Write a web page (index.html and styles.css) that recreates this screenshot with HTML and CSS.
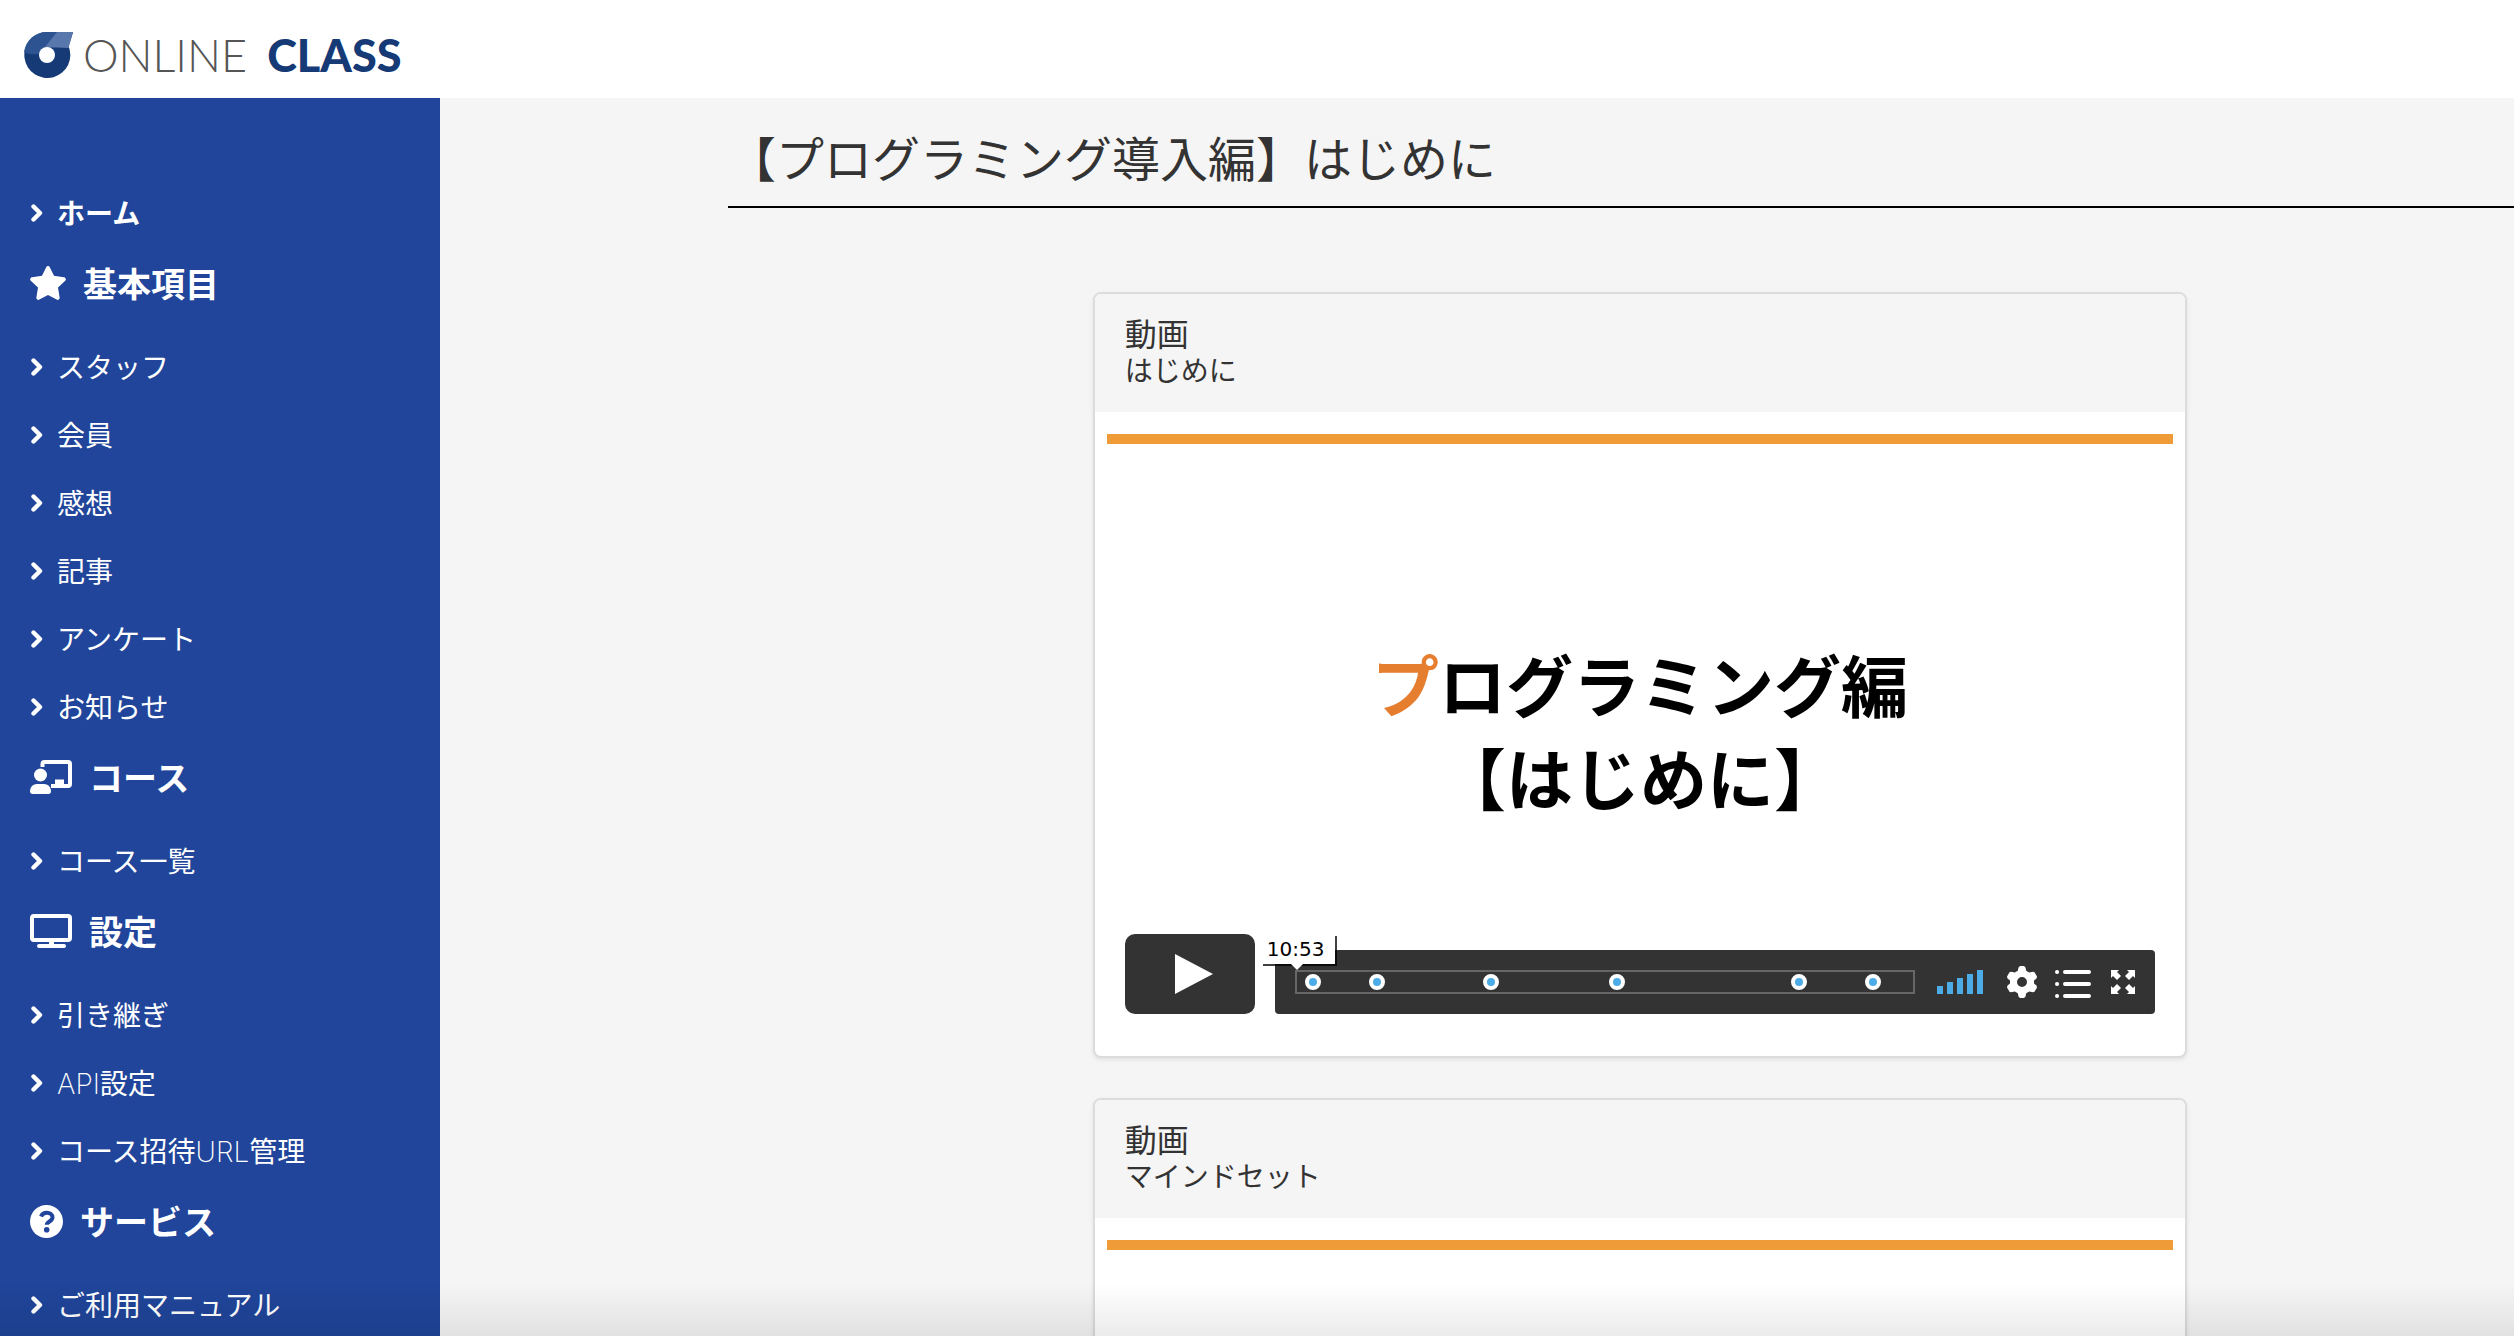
FILE: index.html
```
<!DOCTYPE html>
<html lang="ja">
<head>
	<meta charset="UTF-8">
	<title>ONLINE CLASS</title>
	<link rel="stylesheet" href="styles.css">
</head>
<body>
	<svg class="sprite" aria-hidden="true">
		<symbol id="chevron" viewBox="0 0 12 18">
			<path d="M2.500 2.500L9 9l-6.500 6.500" fill="none" stroke="currentColor" stroke-width="4.400" stroke-linecap="round" stroke-linejoin="round"/>
		</symbol>
	</svg>
	<header class="header">
		<a href="#" class="logo">
			<svg class="logo_mark" viewBox="0 0 49 46">
				<path d="M49 0H23a23 23 0 1 0 21.500 14z" fill="#153a76"/>
				<path d="M49 0H23C11 0 2 8 0 20c8 4 18 3 24-4l20.500-2z" fill="#2d5490"/>
				<path d="M49 0H33L21 15l23.500 1z" fill="#5877ad"/>
				<circle cx="23" cy="23" r="8" fill="#fff"/>
			</svg>
			<span class="logo_online">ONLINE</span>
			<span class="logo_class">CLASS</span>
		</a>
	</header>
	<div class="wrap">
		<nav class="sidebar">
			<ul>
				<li><a href="#" class="home"><svg class="chevron"><use href="#chevron"/></svg>ホーム</a></li>
			</ul>
			<h2>
				<svg class="icon" width="36" height="34" viewBox="0 0 36 34"><path d="M16.200 1.200a2 2 0 0 1 3.600 0l4.200 8.600 9.800 1.500a2 2 0 0 1 1.200 3.600l-7 6.700 1.600 9.900a2 2 0 0 1-3 2.100L18 29.100l-8.600 4.500a2 2 0 0 1-3-2.100L8 21.600 1 14.900a2 2 0 0 1 1.200-3.600L12 9.800z" fill="currentColor"/></svg>
				基本項目
			</h2>
			<ul>
				<li><a href="#"><svg class="chevron"><use href="#chevron"/></svg>スタッフ</a></li>
				<li><a href="#"><svg class="chevron"><use href="#chevron"/></svg>会員</a></li>
				<li><a href="#"><svg class="chevron"><use href="#chevron"/></svg>感想</a></li>
				<li><a href="#"><svg class="chevron"><use href="#chevron"/></svg>記事</a></li>
				<li><a href="#"><svg class="chevron"><use href="#chevron"/></svg>アンケート</a></li>
				<li><a href="#"><svg class="chevron"><use href="#chevron"/></svg>お知らせ</a></li>
			</ul>
			<h2>
				<svg class="icon" width="42" height="34" viewBox="0 0 42 34">
					<path d="M12.500 7V4a2 2 0 0 1 2-2H38a2 2 0 0 1 2 2v20a2 2 0 0 1-2 2H21" fill="none" stroke="currentColor" stroke-width="4"/>
					<path d="M25 19.500h9V26h-9z" fill="currentColor"/>
					<circle cx="10.500" cy="15" r="6.500" fill="currentColor"/>
					<path d="M0 31.500C0 27 3 24 7 24h7c4 0 7 3 7 7.500 0 1.500-1 2.500-2.500 2.500h-16C1 34 0 33 0 31.500z" fill="currentColor"/>
				</svg>
				コース
			</h2>
			<ul>
				<li><a href="#"><svg class="chevron"><use href="#chevron"/></svg>コース一覧</a></li>
			</ul>
			<h2>
				<svg class="icon" width="42" height="34" viewBox="0 0 42 34">
					<rect x="2" y="2" width="38" height="24" rx="2" fill="none" stroke="currentColor" stroke-width="4"/>
					<path d="M19 27h5v4h-5z" fill="currentColor"/>
					<rect x="7" y="30" width="29" height="4" rx="2" fill="currentColor"/>
				</svg>
				設定
			</h2>
			<ul>
				<li><a href="#"><svg class="chevron"><use href="#chevron"/></svg>引き継ぎ</a></li>
				<li><a href="#"><svg class="chevron"><use href="#chevron"/></svg><span><span class="latin">API</span>設定</span></a></li>
				<li><a href="#"><svg class="chevron"><use href="#chevron"/></svg><span>コース招待<span class="latin">URL</span>管理</span></a></li>
			</ul>
			<h2>
				<svg class="icon" width="33" height="33" viewBox="0 0 33 33">
					<circle cx="16.500" cy="16.500" r="16.500" fill="currentColor"/>
					<path d="M11 11.500c1-2.500 3-3.800 5.800-3.800 3.300 0 5.700 2 5.700 4.700 0 4-5.700 4-5.700 7.300" fill="none" stroke="#20459a" stroke-width="4"/>
					<circle cx="16.700" cy="24.800" r="2.800" fill="#20459a"/>
				</svg>
				サービス
			</h2>
			<ul>
				<li><a href="#"><svg class="chevron"><use href="#chevron"/></svg>ご利用マニュアル</a></li>
			</ul>
		</nav>
		<main class="main">
			<div class="content">
				<h1>【プログラミング導入編】はじめに</h1>
				<section class="card">
					<div class="card_head">
						<h3>動画</h3>
						<p>はじめに</p>
					</div>
					<div class="card_body">
						<div class="video">
							<div class="slide">
								<p><span class="orange">プ</span>ログラミング編</p>
								<p>【はじめに】</p>
							</div>
							<div class="player">
								<button class="play" aria-label="再生">
									<svg width="38" height="40" viewBox="0 0 38 40"><path d="M0 0l38 20L0 40z" fill="#fff"/></svg>
								</button>
								<div class="bar">
									<div class="progress">
										<span class="time">10:53</span>
										<button class="dot" style="left:2.600%"></button>
										<button class="dot" style="left:13%"></button>
										<button class="dot" style="left:31.500%"></button>
										<button class="dot" style="left:52%"></button>
										<button class="dot" style="left:81.500%"></button>
										<button class="dot" style="left:93.500%"></button>
									</div>
									<button class="volume" aria-label="音量">
										<svg width="46" height="24" viewBox="0 0 46 24"><path d="M0 16h6v8H0zM10 12h6v12h-6zM20 8h6v16h-6zM30 4h6v20h-6zM40 0h6v24h-6z" fill="#4bace8"/></svg>
									</button>
									<button class="gear" aria-label="設定">
										<svg width="30" height="32" viewBox="0 0 30 32"><path fill-rule="evenodd" d="M13 0h4l1.500 1.500.7 3.300 3 1.600L26 5.700l1.500.6L30 10.500l-.5 2-2.500 2v3l2.500 2 .5 2-2.500 4.200-1.500.6-3.800-.7-3 1.600-.7 3.300L17 32h-4l-1.500-1.500-.7-3.300-3-1.600-3.800.7-1.500-.6L0 21.500l.5-2 2.500-2v-3l-2.500-2-.5-2 2.500-4.200L4 5.700l3.800.7 3-1.600.7-3.300zM15 11a5 5 0 1 0 0 10 5 5 0 0 0 0-10z" fill="#fff"/></svg>
									</button>
									<button class="chapters" aria-label="チャプター">
										<svg width="36" height="28" viewBox="0 0 36 28" stroke="#fff" stroke-width="4" stroke-linecap="round"><path d="M2 2h.1M10 2h24M2 14h.1M10 14h24M2 26h.1M10 26h24"/></svg>
									</button>
									<button class="full" aria-label="全画面">
										<svg width="24" height="24" viewBox="0 0 24 24"><path d="M0 0h8L6 2l4 4-4 4-4-4-2 2zM24 0h-8l2 2-4 4 4 4 4-4 2 2zM0 24h8l-2-2 4-4-4-4-4 4-2-2zM24 24h-8l2-2-4-4 4-4 4 4 2-2z" fill="#fff"/></svg>
									</button>
								</div>
							</div>
						</div>
					</div>
				</section>
				<section class="card">
					<div class="card_head">
						<h3>動画</h3>
						<p>マインドセット</p>
					</div>
					<div class="card_body">
						<div class="video"></div>
					</div>
				</section>
			</div>
		</main>
	</div>
	<div class="shade"></div>
</body>
</html>
```
FILE: styles.css
```
*{
	box-sizing: border-box;
}
body,h1,h2,h3,p,ul{
	margin: 0;
	padding: 0;
}
body{
	height: 100vh;
	display: flex;
	flex-direction: column;
	font-family: "Noto Sans CJK JP", sans-serif;
	color: #333;
	background: #f5f5f5;
}
a{
	color: inherit;
	text-decoration: none;
}
button{
	padding: 0;
	border: none;
	background: none;
	cursor: pointer;
}
svg{
	display: block;
	flex: none;
}
.sprite{
	width: 0;
	height: 0;
	position: absolute;
}
/* header */
.header{
	height: 98px;
	flex: none;
	padding: 0 24px;
	display: flex;
	align-items: center;
	background: #fff;
}
.logo{
	display: flex;
	align-items: center;
	padding-top: 12px;
	font-family: Lato, sans-serif;
	font-size: 45px;
	line-height: 46px;
}
.logo_mark{
	width: 49px;
	height: 46px;
	margin-right: 10px;
}
.logo_online{
	font-weight: 300;
	color: #555;
	margin-right: 20px;
}
.logo_class{
	font-weight: 900;
	color: #153a76;
}
.wrap{
	flex: 1;
	min-height: 0;
	display: flex;
}
/* sidebar */
.sidebar{
	width: 440px;
	flex: none;
	padding: 80px 30px 0;
	overflow: auto;
	scrollbar-width: none;
	color: #fff;
	background: #20459a;
}
.sidebar ul{
	list-style: none;
}
.sidebar li a{
	height: 68px;
	display: flex;
	align-items: center;
	font-size: 28px;
}
.sidebar .home{
	font-weight: 700;
}
.sidebar h2{
	height: 72px;
	margin-bottom: 14px;
	display: flex;
	align-items: center;
	gap: 17px;
	font-size: 34px;
	font-weight: 700;
}
.icon{
	margin-top: 2px;
}
.chevron{
	width: 12px;
	height: 18px;
	margin: 2px 14px 0 1px;
}
.latin{
	font-family: Inter, sans-serif;
	font-weight: 200;
}
/* content */
.main{
	flex: 1;
	min-width: 0;
	overflow-x: hidden;
	overflow-y: auto;
	scrollbar-width: none;
}
.content{
	margin: 0 -38px 0 288px;
}
h1{
	padding: 22px 0 14px;
	margin-bottom: 84px;
	border-bottom: 2px solid #000;
	font-size: 48px;
	line-height: 72px;
	font-weight: 400;
}
.card{
	width: 60%;
	margin: 0 auto 40px;
	border: 2px solid #dcdcdc;
	border-radius: 8px;
	box-shadow: 0 2px 4px rgba(0,0,0,.08);
	overflow: hidden;
	background: #fff;
}
.card_head{
	height: 118px;
	padding: 18px 30px;
	background: #f5f5f5;
}
.card_head h3{
	font-size: 32px;
	line-height: 40px;
	font-weight: 400;
}
.card_head p{
	font-size: 28px;
	line-height: 34px;
}
.card_body{
	padding: 22px 12px;
}
.video{
	aspect-ratio: 16/9;
	display: flex;
	flex-direction: column;
	border-top: 10px solid #ee9b38;
}
.slide{
	flex: 1;
	display: flex;
	flex-direction: column;
	justify-content: flex-end;
	padding-bottom: 112px;
	text-align: center;
	font-size: 67px;
	line-height: 93px;
	font-weight: 700;
	color: #000;
}
.orange{
	color: #e67e30;
}
/* player */
.player{
	display: flex;
	align-items: flex-end;
	gap: 20px;
	padding: 0 18px 20px;
}
.play{
	width: 130px;
	height: 80px;
	padding-left: 50px;
	border-radius: 10px;
	background: #333;
}
.bar{
	flex: 1;
	height: 64px;
	padding: 0 20px;
	display: flex;
	align-items: center;
	border-radius: 4px;
	background: #333;
}
.progress{
	flex: 1;
	height: 24px;
	border: 2px solid #666;
	position: relative;
}
.dot{
	width: 16px;
	height: 16px;
	margin-left: -8px;
	border: 4px solid #fff;
	border-radius: 50%;
	background: #4bace8;
	position: absolute;
	top: 2px;
}
.time{
	width: 74px;
	height: 30px;
	padding-left: 6px;
	background: #fff;
	box-shadow: 2px 2px 0 rgba(0,0,0,.75);
	font-family: "DejaVu Sans", sans-serif;
	font-size: 20px;
	line-height: 30px;
	color: #000;
	position: absolute;
	left: -36px;
	bottom: 28px;
}
.time::after{
	content: "";
	border: 6px solid transparent;
	border-top-color: #fff;
	border-bottom: none;
	position: absolute;
	left: 30px;
	top: 30px;
}
.volume{
	margin-left: 22px;
}
.gear{
	margin-left: 24px;
}
.chapters{
	margin: 4px 20px 0 18px;
}
/* dark edge at the bottom of the window */
.shade{
	height: 52px;
	background: linear-gradient(rgba(0,0,0,0), rgba(0,0,0,.08));
	pointer-events: none;
	position: fixed;
	left: 0;
	right: 0;
	bottom: 0;
}
```
